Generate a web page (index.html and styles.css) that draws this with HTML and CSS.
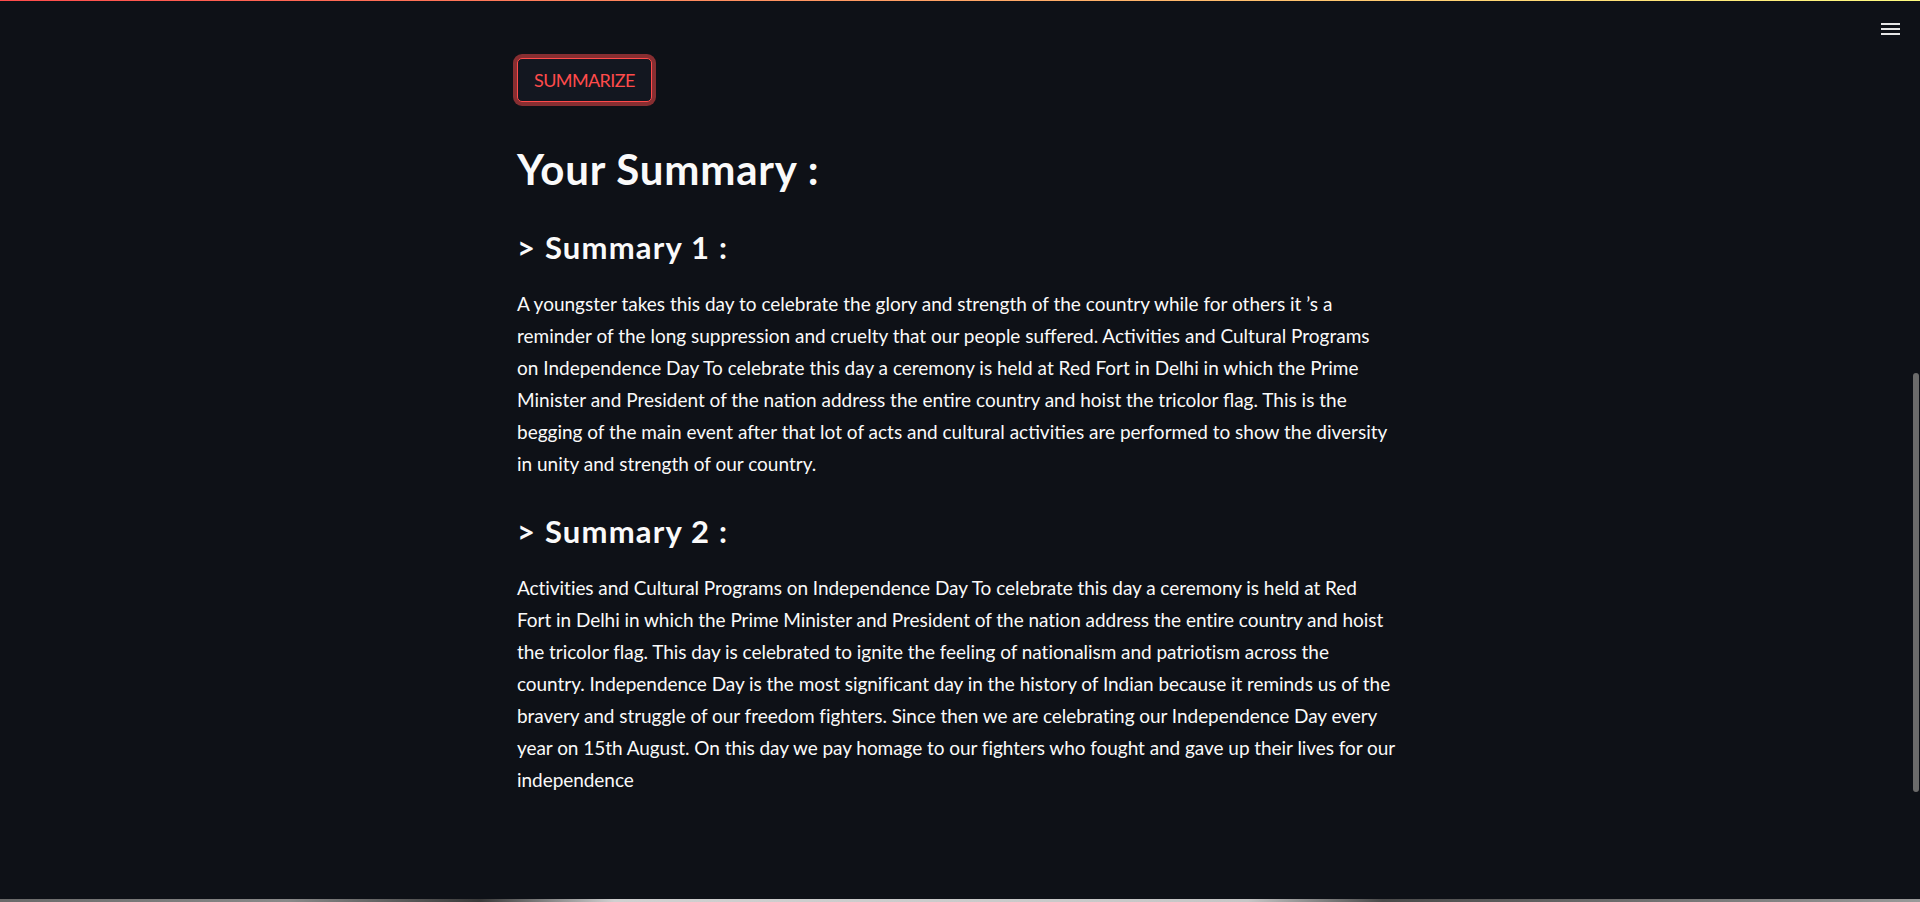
FILE: index.html
```html
<!DOCTYPE html>
<html lang="en">
<head>
<meta charset="utf-8">
<title>Summarizer</title>
<link rel="stylesheet" href="styles.css">
</head>
<body>
<div class="decoration"></div>
<button class="menu-btn" aria-label="Menu">
  <svg width="20" height="14" viewBox="0 0 20 14"><rect x="0" y="1" width="19" height="2" fill="#e6e6e6"/><rect x="0" y="6" width="19" height="2" fill="#e6e6e6"/><rect x="0" y="11" width="19" height="2" fill="#e6e6e6"/></svg>
</button>
<div class="scroll-thumb"></div>
<main class="app">
  <section class="block">
    <div class="btn-row"><button class="btn-summarize">SUMMARIZE</button></div>
    <h2 class="title">Your Summary :</h2>
    <h3 class="sub">&gt; Summary 1 :</h3>
    <p class="text">A youngster takes this day to celebrate the glory and strength of the country while for others it ’s a reminder of the long suppression and cruelty that our people suffered. Activities and Cultural Programs on Independence Day To celebrate this day a ceremony is held at Red Fort in Delhi in which the Prime Minister and President of the nation address the entire country and hoist the tricolor flag. This is the begging of the main event after that lot of acts and cultural activities are performed to show the diversity in unity and strength of our country.</p>
    <h3 class="sub sub-2">&gt; Summary 2 :</h3>
    <p class="text text-tight">Activities and Cultural Programs on Independence Day To celebrate this day a ceremony is held at Red Fort in Delhi in which the Prime Minister and President of the nation address the entire country and hoist the tricolor flag. This day is celebrated to ignite the feeling of nationalism and patriotism across the country. Independence Day is the most significant day in the history of Indian because it reminds us of the bravery and struggle of our freedom fighters. Since then we are celebrating our Independence Day every year on 15th August. On this day we pay homage to our fighters who fought and gave up their lives for our independence</p>
  </section>
</main>
<div class="taskbar-edge"></div>
</body>
</html>
```
FILE: styles.css
```css
html, body {
  margin: 0;
  padding: 0;
  height: 100%;
  overflow: hidden;
}
body {
  background: #0e1117;
  color: #fafafa;
  font-family: Lato, "Source Sans Pro", "Noto Sans", sans-serif;
}
.decoration {
  position: fixed;
  top: 0;
  left: 0;
  right: 0;
  height: 1px;
  background: linear-gradient(90deg, rgb(255, 75, 75), rgb(255, 253, 128));
}
.menu-btn {
  position: fixed;
  top: 22px;
  right: 19px;
  width: 20px;
  height: 14px;
  padding: 0;
  border: 0;
  background: none;
  line-height: 0;
}
.scroll-thumb {
  position: fixed;
  right: 1px;
  top: 373px;
  width: 6px;
  height: 419px;
  border-radius: 3px;
  background: #6b6b6b;
}
.taskbar-edge {
  position: fixed;
  left: 0;
  right: 0;
  bottom: 0;
  height: 3px;
  background: linear-gradient(90deg, #6a6a6a 0%, #8a8a8a 15%, #3a3a3a 25%, #d0d0d0 32%, #c6c6c6 65%, #4a4a4a 72%, #6e6e6e 85%, #9a9a9a 100%);
}
.app {
  display: flex;
  justify-content: center;
  padding: 58px 8px 0 0;
}
.block {
  width: 878px;
  display: flex;
  flex-direction: column;
}
.btn-row {
  display: flex;
}
.btn-summarize {
  height: 44px;
  padding: 0 16px;
  border: 1px solid rgb(255, 75, 75);
  border-radius: 5px;
  background: rgb(19, 23, 32);
  color: rgb(255, 75, 75);
  font-family: inherit;
  font-size: 18px;
  letter-spacing: -0.6px;
  box-shadow: 0 0 0 4px rgba(255, 75, 75, 0.5);
}
.title {
  margin: 44px 0 0;
  font-size: 42px;
  line-height: 47px;
  font-weight: 700;
  letter-spacing: 0.8px;
}
.sub {
  margin: 37px 0 0;
  font-size: 31px;
  line-height: 35px;
  font-weight: 700;
  letter-spacing: 1.2px;
}
.sub-2 {
  margin-top: 34px;
}
.text {
  margin: 23px 0 0;
  font-size: 19px;
  line-height: 32px;
}
.text-tight {
  letter-spacing: -0.05px;
}
```
